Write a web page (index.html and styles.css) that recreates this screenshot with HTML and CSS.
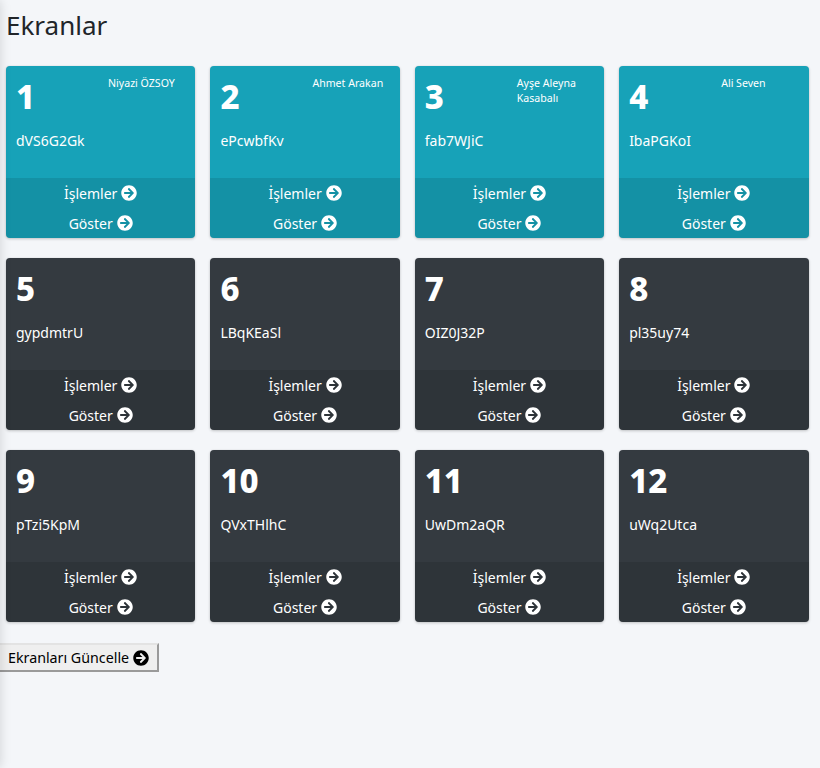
FILE: index.html
```html
<!DOCTYPE html>
<html lang="tr">
<head>
<meta charset="utf-8">
<title>Ekranlar</title>
<link rel="stylesheet" href="styles.css">
</head>
<body>
<svg class="defs" width="0" height="0" aria-hidden="true"><symbol id="arrow" viewBox="0 0 512 512"><path fill="currentColor" d="M256 8c137 0 248 111 248 248S393 504 256 504 8 393 8 256 119 8 256 8zm-28.9 143.6l75.5 72.4H120c-13.3 0-24 10.7-24 24v16c0 13.3 10.7 24 24 24h182.6l-75.5 72.4c-9.7 9.3-9.9 24.8-.4 34.3l11 10.9c9.4 9.4 24.6 9.4 33.9 0L404.3 273c9.4-9.4 9.4-24.6 0-33.9L271.6 106.3c-9.4-9.4-24.6-9.4-33.9 0l-11 10.9c-9.5 9.6-9.3 25.1.4 34.4z"/></symbol></svg>
<div class="edge"></div>
<main class="page">
<h1 class="title">Ekranlar</h1>
<section class="grid">
<article class="card info"><div class="inner"><div class="head"><h3 class="num">1</h3><span class="owner">Niyazi ÖZSOY</span></div><p class="code">dVS6G2Gk</p></div><div class="foot"><a class="link">İşlemler <svg class="ico"><use href="#arrow"/></svg></a><a class="link">Göster <svg class="ico"><use href="#arrow"/></svg></a></div></article>
<article class="card info"><div class="inner"><div class="head"><h3 class="num">2</h3><span class="owner">Ahmet Arakan</span></div><p class="code">ePcwbfKv</p></div><div class="foot"><a class="link">İşlemler <svg class="ico"><use href="#arrow"/></svg></a><a class="link">Göster <svg class="ico"><use href="#arrow"/></svg></a></div></article>
<article class="card info"><div class="inner"><div class="head"><h3 class="num">3</h3><span class="owner">Ayşe Aleyna Kasabalı</span></div><p class="code">fab7WJiC</p></div><div class="foot"><a class="link">İşlemler <svg class="ico"><use href="#arrow"/></svg></a><a class="link">Göster <svg class="ico"><use href="#arrow"/></svg></a></div></article>
<article class="card info"><div class="inner"><div class="head"><h3 class="num">4</h3><span class="owner">Ali Seven</span></div><p class="code">IbaPGKoI</p></div><div class="foot"><a class="link">İşlemler <svg class="ico"><use href="#arrow"/></svg></a><a class="link">Göster <svg class="ico"><use href="#arrow"/></svg></a></div></article>
<article class="card dark"><div class="inner"><div class="head"><h3 class="num">5</h3></div><p class="code">gypdmtrU</p></div><div class="foot"><a class="link">İşlemler <svg class="ico"><use href="#arrow"/></svg></a><a class="link">Göster <svg class="ico"><use href="#arrow"/></svg></a></div></article>
<article class="card dark"><div class="inner"><div class="head"><h3 class="num">6</h3></div><p class="code">LBqKEaSl</p></div><div class="foot"><a class="link">İşlemler <svg class="ico"><use href="#arrow"/></svg></a><a class="link">Göster <svg class="ico"><use href="#arrow"/></svg></a></div></article>
<article class="card dark"><div class="inner"><div class="head"><h3 class="num">7</h3></div><p class="code">OIZ0J32P</p></div><div class="foot"><a class="link">İşlemler <svg class="ico"><use href="#arrow"/></svg></a><a class="link">Göster <svg class="ico"><use href="#arrow"/></svg></a></div></article>
<article class="card dark"><div class="inner"><div class="head"><h3 class="num">8</h3></div><p class="code">pl35uy74</p></div><div class="foot"><a class="link">İşlemler <svg class="ico"><use href="#arrow"/></svg></a><a class="link">Göster <svg class="ico"><use href="#arrow"/></svg></a></div></article>
<article class="card dark"><div class="inner"><div class="head"><h3 class="num">9</h3></div><p class="code">pTzi5KpM</p></div><div class="foot"><a class="link">İşlemler <svg class="ico"><use href="#arrow"/></svg></a><a class="link">Göster <svg class="ico"><use href="#arrow"/></svg></a></div></article>
<article class="card dark"><div class="inner"><div class="head"><h3 class="num">10</h3></div><p class="code">QVxTHlhC</p></div><div class="foot"><a class="link">İşlemler <svg class="ico"><use href="#arrow"/></svg></a><a class="link">Göster <svg class="ico"><use href="#arrow"/></svg></a></div></article>
<article class="card dark"><div class="inner"><div class="head"><h3 class="num">11</h3></div><p class="code">UwDm2aQR</p></div><div class="foot"><a class="link">İşlemler <svg class="ico"><use href="#arrow"/></svg></a><a class="link">Göster <svg class="ico"><use href="#arrow"/></svg></a></div></article>
<article class="card dark"><div class="inner"><div class="head"><h3 class="num">12</h3></div><p class="code">uWq2Utca</p></div><div class="foot"><a class="link">İşlemler <svg class="ico"><use href="#arrow"/></svg></a><a class="link">Göster <svg class="ico"><use href="#arrow"/></svg></a></div></article>
</section>
<button class="update" type="button">Ekranları Güncelle <svg class="ico"><use href="#arrow"/></svg></button>
</main>
</body>
</html>
```
FILE: styles.css
```css
* { box-sizing: border-box; }
html, body { height: 100%; }
body {
  margin: 0;
  background: #f4f6f9;
  color: #212529;
  font-family: "Noto Sans", "Liberation Sans", sans-serif;
  overflow: hidden;
}
.defs { position: absolute; }
.edge {
  position: fixed;
  top: 0;
  bottom: 0;
  left: -20px;
  width: 20px;
  box-shadow: 0 0 12px rgba(0, 0, 0, .15);
}
.page { padding: 0 11.5px 0 6px; }
.title {
  margin: 0;
  padding-top: 7px;
  height: 66px;
  font-size: 26px;
  line-height: 36px;
  font-weight: 400;
}
.grid {
  display: grid;
  grid-template-columns: repeat(4, 1fr);
  column-gap: 15px;
  row-gap: 20px;
}
.card {
  display: flex;
  flex-direction: column;
  height: 172px;
  border-radius: 4px;
  color: #fff;
  box-shadow: 0 0 1px rgba(0, 0, 0, .125), 0 1px 3px rgba(0, 0, 0, .2);
  overflow: hidden;
}
.info { background: #17a2b8; }
.dark { background: #343a40; }
.inner { flex: 1; padding: 10px; }
.head { display: flex; height: 46px; }
.num {
  flex: 0 0 92px;
  margin: 0;
  font-size: 33px;
  line-height: 42px;
  font-weight: 800;
}
.owner {
  flex: 1;
  font-size: 10.6px;
  line-height: 15px;
}
.code {
  margin: 7px 0 0;
  font-size: 14px;
  line-height: 24px;
}
.foot {
  display: flex;
  flex-direction: column;
  background: rgba(0, 0, 0, .1);
}
.link {
  display: flex;
  justify-content: center;
  align-items: center;
  gap: 4px;
  height: 30px;
  font-size: 14px;
}
.ico {
  width: 16px;
  height: 16px;
  flex: none;
}
.update {
  display: inline-flex;
  align-items: center;
  gap: 4px;
  margin: 21px 0 0 -8px;
  height: 29px;
  padding: 0 8px 0 8px;
  border: 2px solid;
  border-color: #e3e3e3 #9a9a9a #9a9a9a #e3e3e3;
  background: #efefef;
  color: #000;
  font: inherit;
  font-size: 14.25px;
}
```
